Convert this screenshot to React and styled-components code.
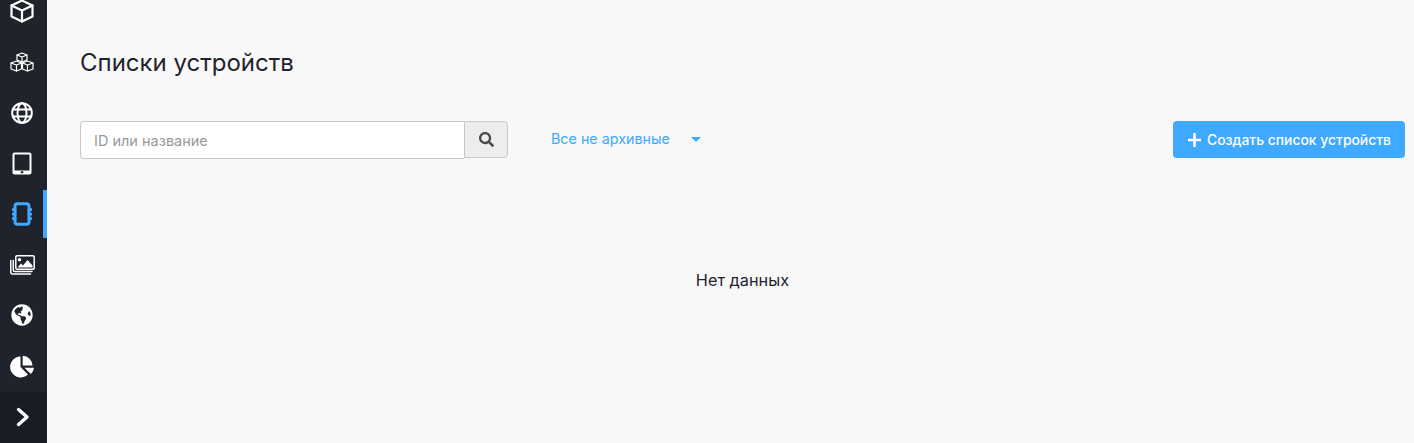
import React from "react";
import styled, { createGlobalStyle } from "styled-components";
import { FaGlobeAmericas, FaSearch } from "react-icons/fa";

const GlobalStyle = createGlobalStyle`
html, body {
  margin: 0;
  height: 100%;
  background: #f8f8f8;
  overflow: hidden;
}
#root { height: 100%; }
* { box-sizing: border-box; }
`;

const Page = styled.div`
  display: flex;
  height: 443px;
  font-family: Inter, "Noto Sans", sans-serif;
  color: #1f232c;
`;
const Sidebar = styled.nav`
  width: 47px;
  flex: none;
  display: flex;
  flex-direction: column;
  justify-content: flex-end;
  background: #1f232c;
  overflow: hidden;
`;
const MenuList = styled.div`
  display: flex;
  flex-direction: column;
  justify-content: flex-end;
  flex: 1;
  min-height: 0;
`;
const MenuItem = styled.div`
  position: relative;
  flex: none;
  height: 50.7px;
  display: flex;
  align-items: center;
  justify-content: center;
  padding: 0 3px 1px 0;
  color: ${(p) => (p.$active ? "#3fa9ff" : "#fff")};
  ${(p) =>
    p.$active &&
    `&::after {
      content: "";
      position: absolute;
      top: 1px;
      bottom: 2px;
      right: 0;
      width: 4px;
      background: #3fa9ff;
    }`}
`;
const Toggle = styled.div`
  flex: none;
  height: 51px;
  display: flex;
  align-items: center;
  justify-content: center;
  padding: 0 1px 1px 0;
  background: #191c24;
  color: #fff;
`;
const Main = styled.main`
  flex: 1;
  min-width: 0;
  padding: 48px 9px 0 33px;
`;
const Title = styled.h1`
  margin: 0;
  font-size: 24px;
  line-height: 30px;
  font-weight: 400;
`;
const Toolbar = styled.div`
  display: flex;
  align-items: flex-start;
  margin-top: 43px;
`;
const Search = styled.div`
  display: flex;
  width: 428px;
`;
const SearchInput = styled.input`
  width: 384px;
  height: 38px;
  padding: 0 13px;
  border: 1px solid #c9c9c9;
  border-right: 0;
  border-radius: 4px 0 0 4px;
  background: #fff;
  font: 400 14.5px Inter, "Noto Sans", sans-serif;
  outline: none;
  &::placeholder { color: #999; opacity: 1; }
`;
const SearchButton = styled.button`
  width: 44px;
  height: 37px;
  display: flex;
  align-items: center;
  justify-content: center;
  padding: 0;
  border: 1px solid #c9c9c9;
  border-radius: 0 4px 4px 0;
  background: #ededed;
  color: #4a4a4a;
  font-size: 15px;
`;
const Filter = styled.div`
  display: flex;
  align-items: center;
  height: 35px;
  margin-left: 43px;
  color: #3fa9ff;
  font-size: 14.3px;
`;
const Caret = styled.span`
  width: 0;
  height: 0;
  margin: 1px 0 0 21px;
  border-left: 5px solid transparent;
  border-right: 5px solid transparent;
  border-top: 5px solid #3fa9ff;
`;
const CreateButton = styled.button`
  margin-left: auto;
  width: 232px;
  height: 37px;
  display: flex;
  align-items: center;
  justify-content: center;
  gap: 6px;
  padding: 0 0 0 1px;
  border: 0;
  border-radius: 4px;
  background: #3fa9ff;
  color: #fff;
  font: 500 13.9px Inter, "Noto Sans", sans-serif;
`;
const Empty = styled.div`
  margin-top: 110px;
  text-align: center;
  font-size: 16.3px;
  line-height: 22px;
`;

const stroke = { fill: "none", stroke: "currentColor", strokeLinejoin: "round", strokeLinecap: "round" };

const CubeIcon = () => (
  <svg width="24" height="24" viewBox="0 0 24 24" {...stroke} strokeWidth="2.200">
    <path d="M12 1.500 22.500 6.500V17.500L12 22.500 1.500 17.500V6.500Z" />
    <path d="M1.500 6.500 12 11.500 22.500 6.500M12 11.500V22.500" />
  </svg>
);
const CubesIcon = () => (
  <svg width="24" height="20" viewBox="0 0 24 20" {...stroke} strokeWidth="1.200">
    <path d="M12 1 17 3V8L12 10 7 8V3Z" />
    <path d="M7 3 12 5 17 3M12 5V10" />
    <path d="M6.500 9 11.500 11V17L6.500 19 1 17V11Z" />
    <path d="M1 11 6.500 13 11.500 11M6.500 13V19" />
    <path d="M17.500 9 23 11V17L17.500 19 12.500 17V11Z" />
    <path d="M12.500 11 17.500 13 23 11M17.500 13V19" />
  </svg>
);
const GlobeIcon = () => (
  <svg width="22" height="22" viewBox="0 0 22 22" {...stroke} strokeWidth="2">
    <circle cx="11" cy="11" r="9.800" />
    <ellipse cx="11" cy="11" rx="4.500" ry="9.800" />
    <path d="M1.800 7.500H20.200M1.800 14.500H20.200" />
  </svg>
);
const TabletIcon = () => (
  <svg width="20" height="23" viewBox="0 0 20 23">
    <path
      fill="currentColor"
      fillRule="evenodd"
      d="M2.500 .5H17.500A2 2 0 0 1 19.500 2.500V20.500A2 2 0 0 1 17.500 22.500H2.500A2 2 0 0 1 .5 20.500V2.500A2 2 0 0 1 2.500 .5ZM2.500 2.500V18.500H17.500V2.500ZM8.700 19.300V21.300H11.300V19.300Z"
    />
  </svg>
);
const NotebookIcon = () => (
  <svg width="20" height="24" viewBox="0 0 20 24" {...stroke} strokeWidth="3">
    <rect x="3" y="1.800" width="14" height="20.400" rx="2.500" />
    <path d="M1.300 7.500H3M1.300 12H3M1.300 16.500H3M17 7.500H18.700M17 12H18.700M17 16.500H18.700" />
  </svg>
);
const ImagesIcon = () => (
  <svg width="25" height="20" viewBox="0 0 25 20">
    <g {...stroke} strokeWidth="1.500">
      <rect x="5.800" y=".8" width="18.400" height="13.400" rx="1.200" />
      <path d="M.8 5.500V17.500A1.500 1.500 0 0 0 2.300 19H20.500" />
      <path d="M3.300 5.500V15A1.500 1.500 0 0 0 4.800 16.500H22" />
    </g>
    <circle cx="9.500" cy="4.700" r="1.800" fill="currentColor" />
    <path fill="currentColor" d="M7.500 12.500 11 8.500 13 10.500 17.500 5 22.500 10.500V12.500Z" />
  </svg>
);
const PieIcon = () => (
  <svg width="24" height="23" viewBox="0 0 24 23" fill="currentColor">
    <path d="M10.500 1.500V12L18 19.500A10.500 10.500 0 1 1 10.500 1.500Z" />
    <path d="M12.700 .8A10 10 0 0 1 22.500 10.500H12.700Z" />
    <path d="M14.500 12.700H24A10 10 0 0 1 20.800 19Z" />
  </svg>
);
const ChevronIcon = () => (
  <svg width="14" height="20" viewBox="0 0 14 20" {...stroke} strokeWidth="3.400">
    <path d="M2.500 2.500 11 10 2.500 17.500" />
  </svg>
);
const PlusIcon = () => (
  <svg width="13" height="14" viewBox="0 0 13 14" {...stroke} strokeWidth="2.600" strokeLinecap="butt">
    <path d="M6.500 0V14M0 7H13" />
  </svg>
);

export default function App() {
  return (
    <Page>
      <GlobalStyle />
      <Sidebar>
        <MenuList>
          <MenuItem><CubeIcon /></MenuItem>
          <MenuItem><CubesIcon /></MenuItem>
          <MenuItem><GlobeIcon /></MenuItem>
          <MenuItem><TabletIcon /></MenuItem>
          <MenuItem $active><NotebookIcon /></MenuItem>
          <MenuItem><ImagesIcon /></MenuItem>
          <MenuItem><FaGlobeAmericas size={22} /></MenuItem>
          <MenuItem><PieIcon /></MenuItem>
        </MenuList>
        <Toggle><ChevronIcon /></Toggle>
      </Sidebar>
      <Main>
        <Title>Списки устройств</Title>
        <Toolbar>
          <Search>
            <SearchInput placeholder="ID или название" />
            <SearchButton><FaSearch /></SearchButton>
          </Search>
          <Filter>
            Все не архивные
            <Caret />
          </Filter>
          <CreateButton>
            <PlusIcon />
            Создать список устройств
          </CreateButton>
        </Toolbar>
        <Empty>Нет данных</Empty>
      </Main>
    </Page>
  );
}
